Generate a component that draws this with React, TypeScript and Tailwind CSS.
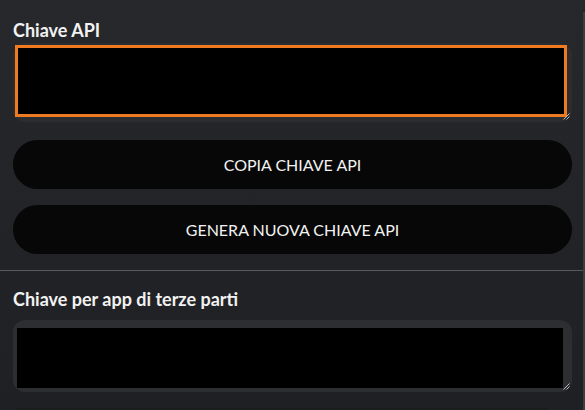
import type { ReactNode } from 'react';

function ResizeGrip() {
  return (
    <svg width="7" height="7" viewBox="0 0 7 7" className="absolute bottom-[2px] right-[2px]">
      <path d="M0.5 6.5L6.5 0.5M3.5 6.5L6.5 3.5" stroke="#b8b8b8" strokeWidth="1" />
    </svg>
  );
}

function FieldLabel({ children }: { children: ReactNode }) {
  return <label className="block text-[18px] font-bold leading-[22px] text-[#f2f2f2]">{children}</label>;
}

function PillButton({ children }: { children: ReactNode }) {
  return (
    <button className="flex h-[49px] w-full items-center justify-center rounded-full bg-[#070707] text-[16px] uppercase text-[#f2f2f2]">
      {children}
    </button>
  );
}

export default function App() {
  return (
    <div className="flex h-[410px] w-[585px] flex-col overflow-hidden bg-gradient-to-b from-[#26282b] to-[#1f2023] font-['Lato',sans-serif]">
      <div className="h-[3px] bg-[#1c1d1f]" />
      <div className="flex flex-1">
        <div className="flex flex-1 flex-col pt-[19px]">
          <div className="pl-[13px] pr-[11px]">
            <FieldLabel>Chiave API</FieldLabel>

            {/* focused key field */}
            <div className="relative mt-[2px] flex h-[79px] rounded-xl bg-[#2b2d30] pb-[5px] pl-[2px] pr-[5px] pt-[2px]">
              <div className="flex-1 border-[3px] border-[#ee7a21] bg-black" />
              <ResizeGrip />
            </div>

            <div className="mt-[18px] flex flex-col gap-4">
              <PillButton>Copia chiave API</PillButton>
              <PillButton>Genera nuova chiave API</PillButton>
            </div>
          </div>

          <div className="mt-4 h-px bg-[#56595c]" />

          <div className="pl-[13px] pr-[11px] pt-[17px]">
            <FieldLabel>Chiave per app di terze parti</FieldLabel>

            <div className="relative mt-[10px] flex h-[72px] rounded-xl bg-[#2c2e31] pb-1 pl-1 pr-[9px] pt-2">
              <div className="flex-1 bg-black" />
              <ResizeGrip />
            </div>

            <div className="mt-4 h-10 w-[539px] rounded-lg bg-[#1b1c1e]" />
          </div>
        </div>
        <div className="mt-3 w-[2px] bg-[#3b3e41]" />
      </div>
    </div>
  );
}
